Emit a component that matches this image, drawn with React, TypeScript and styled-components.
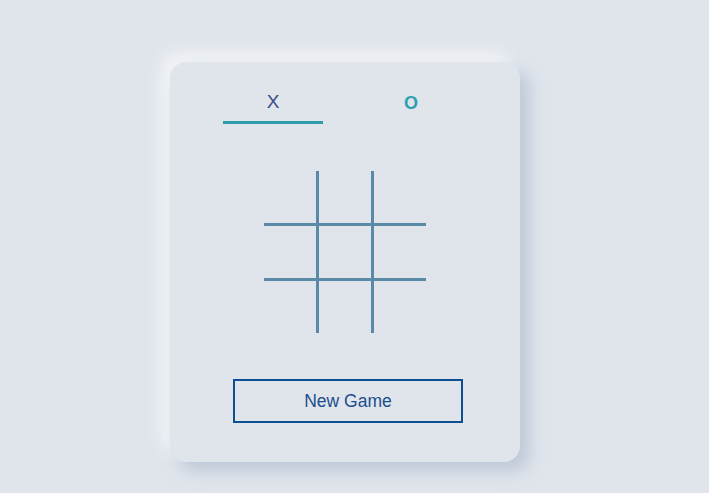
import React, { useState } from "react";
import styled, { createGlobalStyle } from "styled-components";

const Global = createGlobalStyle`
  html, body {
    margin: 0;
    padding: 0;
    background: #e0e5ec;
    font-family: "Liberation Sans", Arial, sans-serif;
  }
`;

const Page = styled.div`
  min-height: 493px;
  box-sizing: border-box;
  padding: 62px 0 0 170px;
`;

const Card = styled.div`
  width: 350px;
  height: 400px;
  box-sizing: border-box;
  border-radius: 16px;
  background: #e0e5ec;
  box-shadow: 9px 9px 16px rgba(163, 177, 198, 0.55),
    -9px -9px 16px rgba(255, 255, 255, 0.6);
  display: flex;
  flex-direction: column;
  padding-top: 26px;
`;

const Tabs = styled.div`
  display: flex;
  gap: 38px;
  padding-left: 53px;
`;

const Tab = styled.button<{ $active?: boolean; $mark: "x" | "o" }>`
  all: unset;
  box-sizing: border-box;
  width: 100px;
  height: 36px;
  padding-bottom: ${(p) => (p.$mark === "x" ? "6px" : "4px")};
  text-align: center;
  font-family: "Liberation Sans", Arial, sans-serif;
  font-size: ${(p) => (p.$mark === "x" ? "19px" : "18px")};
  font-weight: ${(p) => (p.$mark === "o" ? 700 : 400)};
  color: ${(p) => (p.$mark === "x" ? "#3b4b8c" : "#2c9fb0")};
  line-height: 22px;
  border-bottom: 3px solid ${(p) => (p.$active ? "#2e9dac" : "transparent")};
  cursor: pointer;
`;

const Board = styled.div`
  align-self: center;
  margin-top: 47px;
  width: 162px;
  height: 162px;
  display: grid;
  grid-template-columns: repeat(3, 52px);
  grid-template-rows: repeat(3, 52px);
  gap: 3px;
  background: #5b8aa9;
`;

const Cell = styled.div`
  background: #e0e5ec;
`;

const NewGame = styled.button`
  all: unset;
  box-sizing: border-box;
  margin: 46px 0 0 63px;
  width: 230px;
  height: 44px;
  border: 2px solid #0e4f94;
  color: #1b4e8e;
  font-family: "Liberation Sans", Arial, sans-serif;
  font-size: 17.5px;
  text-align: center;
  line-height: 40px;
  cursor: pointer;
`;

export default function App() {
  const [turn, setTurn] = useState<"x" | "o">("x");
  return (
    <>
      <Global />
      <Page>
        <Card>
          <Tabs>
            <Tab $mark="x" $active={turn === "x"} onClick={() => setTurn("x")}>
              X
            </Tab>
            <Tab $mark="o" $active={turn === "o"} onClick={() => setTurn("o")}>
              O
            </Tab>
          </Tabs>
          <Board>
            {Array.from({ length: 9 }).map((_, i) => (
              <Cell key={i} />
            ))}
          </Board>
          <NewGame onClick={() => setTurn("x")}>New Game</NewGame>
        </Card>
      </Page>
    </>
  );
}
